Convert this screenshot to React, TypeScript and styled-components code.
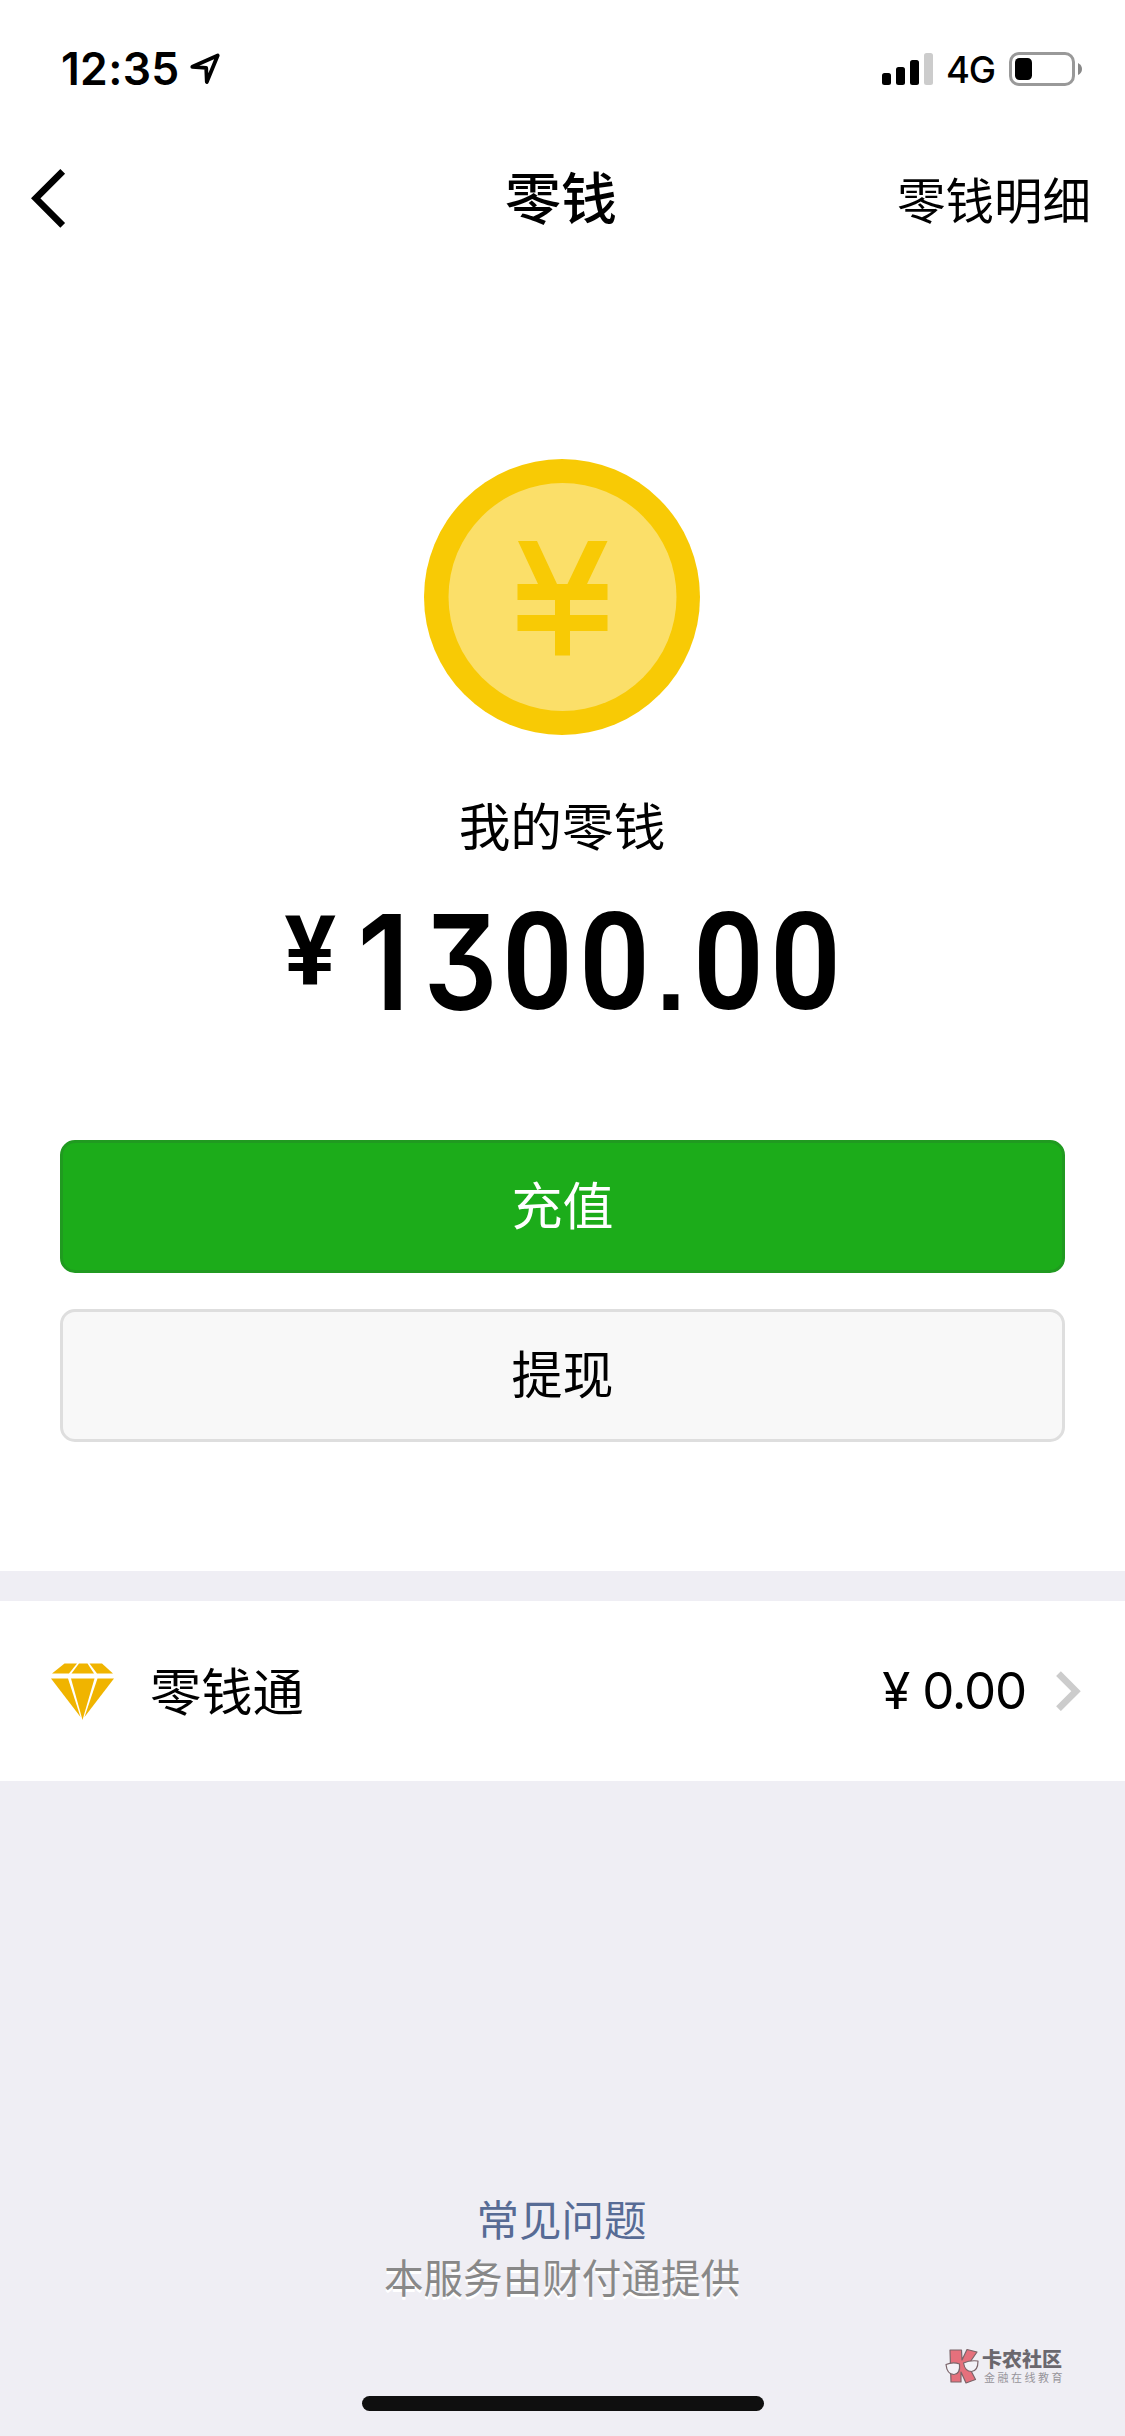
import React from "react";
import styled, { createGlobalStyle } from "styled-components";

const cjk = `"Noto Sans CJK SC", "Noto Sans", sans-serif`;
const latin = `Inter, "Noto Sans CJK SC", sans-serif`;

const GlobalStyle = createGlobalStyle`
  body { margin: 0; background: #efeef4; }
  * { box-sizing: border-box; }
`;

const Screen = styled.div`
  width: 1125px;
  height: 2436px;
  display: flex;
  flex-direction: column;
  background: #efeef4;
  color: #000;
  font-family: ${cjk};
  overflow: hidden;
`;

const StatusBar = styled.header`
  height: 132px;
  flex: none;
  display: flex;
  align-items: center;
  justify-content: space-between;
  padding: 6px 43px 0 61px;
  background: #fff;
`;

const StatusGroup = styled.div`
  display: flex;
  align-items: center;
`;

const Time = styled.span`
  width: 129px;
  font: 600 44.5px/60px ${latin};
  letter-spacing: 0.3px;
`;

const Network = styled.span`
  width: 63px;
  margin-left: 12px;
  font: 500 36.5px/50px ${latin};
  letter-spacing: -1.2px;
  padding-top: 1px;
`;

const NavBar = styled.nav`
  height: 132px;
  flex: none;
  display: grid;
  grid-template-columns: 1fr auto 1fr;
  align-items: center;
  padding: 0 34px 0 31px;
  background: #fff;
`;

const BackButton = styled.button`
  display: flex;
  padding: 0;
  border: 0;
  background: none;
`;

const Title = styled.h1`
  margin: 0;
  padding-bottom: 6px;
  font: 500 56px/76px ${cjk};
`;

const NavAction = styled.span`
  justify-self: end;
  padding-bottom: 1px;
  font: 400 48.5px/70px ${cjk};
`;

const Balance = styled.section`
  height: 1307px;
  flex: none;
  display: flex;
  flex-direction: column;
  align-items: center;
  padding: 195px 60px 0;
  background: #fff;
`;

const Label = styled.p`
  margin: 53px 0 0;
  padding-right: 1px;
  font: 400 51.7px/72px ${cjk};
`;

const Amount = styled.div`
  display: flex;
  align-items: flex-start;
  height: 160px;
  margin: 22px 0 0 3px;
`;

const Currency = styled.span`
  width: 60px;
  padding-top: 20px;
  font: 700 96px/98px Roboto, sans-serif;
`;

const Digit = styled.span`
  width: 77px;
  text-align: center;
  font: 600 135px/163px Roboto, sans-serif;
  transform: scaleX(0.92);
`;

const Point = styled.span`
  display: flex;
  justify-content: center;
  width: 37px;
  font: 700 106px/182px "Liberation Sans", sans-serif;
`;

const FlatDigit = styled.span<{ $stretch: number }>`
  display: flex;
  justify-content: center;
  width: 77px;
  font: 600 132px/161px Inter, sans-serif;
  font-feature-settings: "cv09" 1;
  transform: scaleX(${(p) => p.$stretch});
`;

const Actions = styled.div`
  width: 100%;
  display: flex;
  flex-direction: column;
  gap: 36px;
  margin-top: 98px;
`;

const ActionButton = styled.button<{ $primary?: boolean }>`
  height: 133px;
  border: 3px solid ${(p) => (p.$primary ? "#209a20" : "#dedede")};
  border-radius: 15px;
  background: ${(p) => (p.$primary ? "#1cac1a" : "#f8f8f8")};
  color: ${(p) => (p.$primary ? "#fff" : "#000")};
  font: 400 51px/72px ${cjk};
  padding: 0 0 7px;
`;

const FundRow = styled.section`
  height: 180px;
  flex: none;
  display: flex;
  align-items: center;
  margin-top: 30px;
  padding: 0 44px 0 51px;
  background: #fff;
`;

const FundName = styled.span`
  flex: 1;
  margin-left: 35px;
  padding-bottom: 4px;
  font: 400 51.3px/72px ${cjk};
`;

const FundValue = styled.span`
  font: 400 51px/72px ${latin};
  letter-spacing: -1.2px;
  margin-right: 30px;
`;

const Footer = styled.footer`
  flex: 1;
  display: flex;
  flex-direction: column;
  align-items: center;
  padding-top: 408px;
`;

const HelpLink = styled.a`
  padding-right: 2px;
  font: 400 42.5px/58px ${cjk};
  color: #576b95;
`;

const Provider = styled.span`
  padding-right: 1px;
  font: 400 39.6px/58px ${cjk};
  color: #888;
  text-shadow: 0 3px 0 #fff;
`;

const Watermark = styled.div`
  align-self: flex-end;
  display: flex;
  align-items: center;
  gap: 3px;
  margin: 43px 60px 0 0;
`;

const WatermarkText = styled.div`
  display: flex;
  flex-direction: column;
`;

const WatermarkName = styled.strong`
  font: 900 20px/22px ${cjk};
  color: #6b686e;
`;

const WatermarkTag = styled.small`
  font: 400 11px/14px ${cjk};
  letter-spacing: 2.5px;
  color: #97959b;
  padding-left: 2px;
`;

const HomeIndicator = styled.div`
  width: 402px;
  height: 15px;
  margin-top: 12px;
  border-radius: 8px;
  background: #0f0f0f;
`;

const CoinSvg = styled.svg`
  display: block;
  margin-right: 1px;
`;

const LocationIcon = () => (
  <svg width="30" height="32" viewBox="0 0 30 32" fill="none">
    <path d="M2.3 13.8 L27.7 2.5 L16.8 29 L16.2 14.8 Z" stroke="#000" strokeWidth="3.8" strokeLinejoin="round" />
  </svg>
);

const SignalIcon = () => (
  <svg width="52" height="32" viewBox="0 0 52 32">
    <rect x="0" y="20" width="9" height="12" rx="2.5" />
    <rect x="14" y="14" width="9" height="18" rx="2.5" />
    <rect x="28" y="7" width="9" height="25" rx="2.5" />
    <rect x="42" y="0" width="9" height="32" rx="2.5" fill="#ccc" />
  </svg>
);

const BatteryIcon = () => (
  <svg width="73" height="34" viewBox="0 0 73 34">
    <rect x="1.5" y="1.5" width="63" height="31" rx="8.5" fill="none" stroke="#999" strokeWidth="3" />
    <rect x="6" y="6" width="17" height="22" rx="4.5" />
    <path d="M69 11 Q73 13 73 17 Q73 21 69 23 Z" fill="#888" />
  </svg>
);

const BackIcon = () => (
  <svg width="35" height="60" viewBox="0 0 35 60" fill="none">
    <path d="M31.7 3.300 L4.7 30.300 L31.7 57.300" stroke="#000" strokeWidth="6.7" />
  </svg>
);

const CoinIcon = () => (
  <CoinSvg width="276" height="276" viewBox="0 0 276 276">
    <circle cx="138" cy="138" r="138" fill="#f8ca05" />
    <circle cx="138.5" cy="138" r="114" fill="#fbdf69" />
    <path
      d="M94 82 H113 L133 125 H143.500 L164 82 H183.500 L163 125 H183.500 V141 H146 V156 H183.500 V172 H146 V196.500 H131 V172 H93.500 V156 H131 V141 H93.500 V125 H114 Z"
      fill="#f8ca05"
    />
  </CoinSvg>
);

const DiamondIcon = () => (
  <svg width="64" height="58" viewBox="0 0 64 58" fill="#f0b400">
    <path d="M13.500 1.500 H26 L18 11.500 H1 Z" />
    <path d="M28 1.500 H36.500 L43 11.500 H20.500 Z" />
    <path d="M38.500 1.500 H51 L62 11.500 H46 Z" />
    <path d="M0 16.500 H17 L29.500 55 Z" />
    <path d="M20 16.500 H43.500 L31.500 58 Z" />
    <path d="M46.500 16.500 H63 L33.500 55 Z" />
  </svg>
);

const ChevronIcon = () => (
  <svg width="25" height="40" viewBox="0 0 25 40" fill="none">
    <path d="M2.500 2.700 L20 20.200 L2.500 37.700" stroke="#ccc" strokeWidth="6.7" />
  </svg>
);

const WatermarkLogo = () => (
  <svg width="34" height="36" viewBox="0 0 34 36">
    <g stroke="#7b6469" strokeWidth="1.2" strokeLinejoin="round">
      <path d="M5 2 L16.500 2 L17 12 L22 1.500 L32 4 L23 17 L30.500 31.500 L21 35 L16 24 L16 34 L6 34 Z" fill="#e5707c" />
      <path d="M1 16.500 Q8 13.500 14.500 16 Q15.500 26 9 26.500 Q2 26.500 1 16.500 Z" fill="#f3f2f7" />
      <path d="M18.500 15 Q25 12 33 13 Q33 23 26.500 23.500 Q20 23.500 18.500 15 Z" fill="#f3f2f7" />
    </g>
  </svg>
);

export default function App() {
  return (
    <>
      <GlobalStyle />
      <Screen>
        <StatusBar>
          <StatusGroup>
            <Time>12:35</Time>
            <LocationIcon />
          </StatusGroup>
          <StatusGroup>
            <SignalIcon />
            <Network>4G</Network>
            <BatteryIcon />
          </StatusGroup>
        </StatusBar>
        <NavBar>
          <BackButton aria-label="返回">
            <BackIcon />
          </BackButton>
          <Title>零钱</Title>
          <NavAction>零钱明细</NavAction>
        </NavBar>
        <Balance>
          <CoinIcon />
          <Label>我的零钱</Label>
          <Amount>
            <Currency>¥</Currency>
            <FlatDigit $stretch={0.94}>1</FlatDigit>
            <FlatDigit $stretch={0.88}>3</FlatDigit>
            <Digit>0</Digit>
            <Digit>0</Digit>
            <Point>.</Point>
            <Digit>0</Digit>
            <Digit>0</Digit>
          </Amount>
          <Actions>
            <ActionButton $primary>充值</ActionButton>
            <ActionButton>提现</ActionButton>
          </Actions>
        </Balance>
        <FundRow>
          <DiamondIcon />
          <FundName>零钱通</FundName>
          <FundValue>¥ 0.00</FundValue>
          <ChevronIcon />
        </FundRow>
        <Footer>
          <HelpLink>常见问题</HelpLink>
          <Provider>本服务由财付通提供</Provider>
          <Watermark>
            <WatermarkLogo />
            <WatermarkText>
              <WatermarkName>卡农社区</WatermarkName>
              <WatermarkTag>金融在线教育</WatermarkTag>
            </WatermarkText>
          </Watermark>
          <HomeIndicator />
        </Footer>
      </Screen>
    </>
  );
}
